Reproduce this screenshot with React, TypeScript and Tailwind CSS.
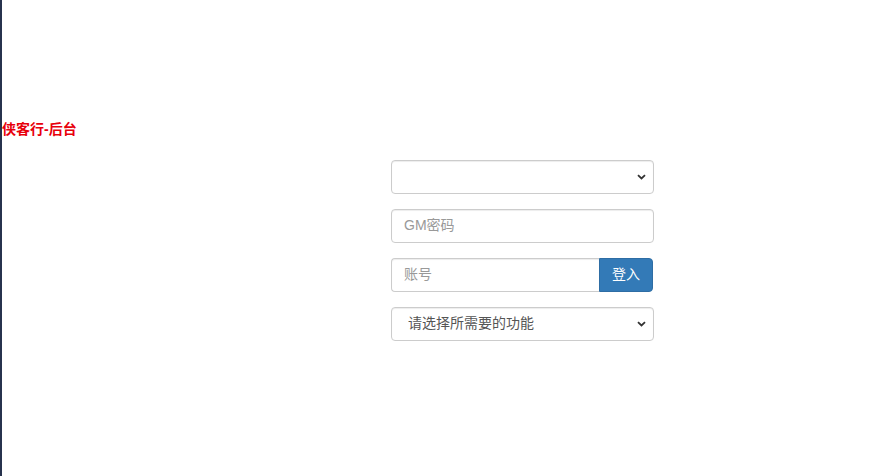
function Chevron() {
  return (
    <svg
      className="pointer-events-none absolute right-[8px] top-1/2 -translate-y-1/2"
      width="9"
      height="6"
      viewBox="0 0 9 6"
    >
      <path d="M1 1.2 L4.5 4.5 L8 1.2" fill="none" stroke="#333" strokeWidth="1.8" />
    </svg>
  );
}

function SelectBox({ label }: { label?: string }) {
  return (
    <div className="relative h-[34px] w-[263px]">
      <select className="h-full w-full appearance-none rounded-[4px] border border-[#ccc] bg-white pb-[2px] pl-[16px] text-[14px] text-[#555] shadow-[inset_0_1px_1px_rgba(0,0,0,0.075)] outline-none">
        {label ? <option>{label}</option> : <option></option>}
      </select>
      <Chevron />
    </div>
  );
}

export default function App() {
  return (
    <div
      className="h-[476px] w-full border-l-2 border-[#27324d] bg-white"
      style={{ fontFamily: '"Liberation Sans", "Noto Sans CJK SC", sans-serif' }}
    >
      <div className="pt-[119px] text-[14px] font-bold leading-[20px] text-[#e8000b]">侠客行-后台</div>
      <div className="ml-[389px] mt-[21px] flex flex-col gap-[15px]">
        <SelectBox />
        <input
          className="h-[34px] w-[263px] rounded-[4px] border border-[#ccc] px-[12px] pb-[2px] text-[14px] text-[#555] shadow-[inset_0_1px_1px_rgba(0,0,0,0.075)] outline-none placeholder:text-[#999]"
          placeholder="GM密码"
        />
        <div className="flex h-[34px] w-[262px]">
          <input
            className="h-full flex-1 rounded-l-[4px] border border-r-0 border-[#ccc] px-[12px] pb-[2px] text-[14px] text-[#555] shadow-[inset_0_1px_1px_rgba(0,0,0,0.075)] outline-none placeholder:text-[#999]"
            placeholder="账号"
          />
          <button className="h-full w-[54px] rounded-r-[4px] border border-[#2e6da4] bg-[#337ab7] pb-[2px] text-[14px] text-white">
            登入
          </button>
        </div>
        <SelectBox label="请选择所需要的功能" />
      </div>
    </div>
  );
}
